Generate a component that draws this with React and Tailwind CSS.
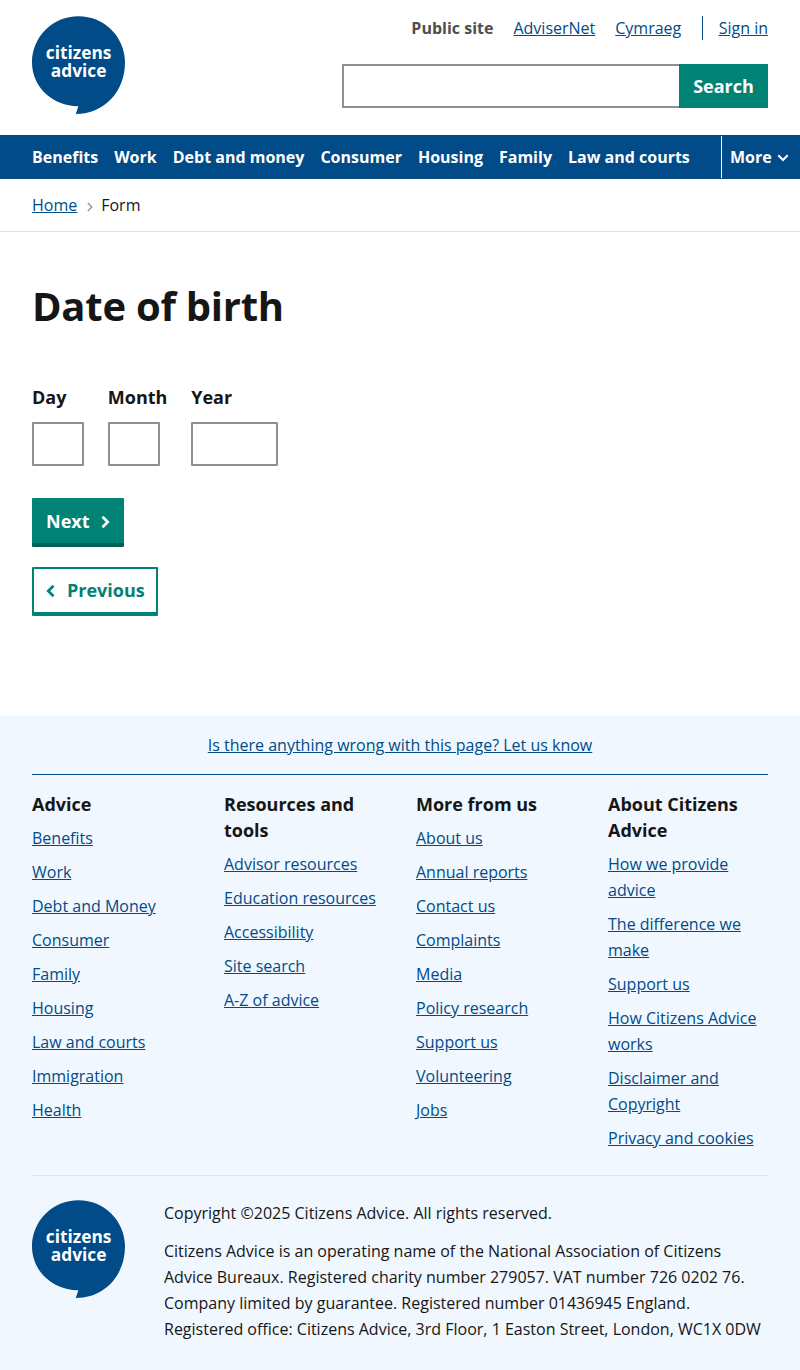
const navItems = ['Benefits', 'Work', 'Debt and money', 'Consumer', 'Housing', 'Family', 'Law and courts'];

const footerColumns = [
  {
    title: 'Advice',
    links: ['Benefits', 'Work', 'Debt and Money', 'Consumer', 'Family', 'Housing', 'Law and courts', 'Immigration', 'Health'],
  },
  {
    title: 'Resources and tools',
    links: ['Advisor resources', 'Education resources', 'Accessibility', 'Site search', 'A-Z of advice'],
  },
  {
    title: 'More from us',
    links: ['About us', 'Annual reports', 'Contact us', 'Complaints', 'Media', 'Policy research', 'Support us', 'Volunteering', 'Jobs'],
  },
  {
    title: 'About Citizens Advice',
    links: [
      'How we provide advice',
      'The difference we make',
      'Support us',
      'How Citizens Advice works',
      'Disclaimer and Copyright',
      'Privacy and cookies',
    ],
  },
];

const dateFields = [
  { label: 'Day', width: 'w-[52px]' },
  { label: 'Month', width: 'w-[52px]' },
  { label: 'Year', width: 'w-[87px]' },
];

function Logo() {
  return (
    <svg width="93" height="98" viewBox="0 0 93 98" className="block shrink-0" role="img" aria-label="Citizens Advice">
      <path
        fill="#004b88"
        d="M46.5.3C72.2.3 93 20.8 93 46.6C93 75.5 72.5 98 43.8 98L46.4 90.3C20.5 90.3 0 71 0 46.6C0 20.8 20.8.3 46.5.3Z"
      />
      <g fill="#fff" fontFamily="'Open Sans', sans-serif" fontWeight="700" fontSize="18" textAnchor="middle">
        <text x="46.6" y="43.4" textLength="65.6" lengthAdjust="spacingAndGlyphs">citizens</text>
        <text x="46.6" y="61.4" textLength="55.6" lengthAdjust="spacingAndGlyphs">advice</text>
      </g>
    </svg>
  );
}

function Link({ children }) {
  return (
    <a href="#" className="text-[#004b88] underline">
      {children}
    </a>
  );
}

function Chevron({ d, className, width, height, stroke }) {
  return (
    <svg width={width} height={height} viewBox={`0 0 ${width} ${height}`} fill="none" stroke="currentColor" strokeWidth={stroke} className={className} aria-hidden="true">
      <path d={d} />
    </svg>
  );
}

export default function App() {
  return (
    <div className="min-h-[1370px] bg-white font-['Open_Sans',sans-serif] text-base leading-[26px] text-[#161616] antialiased">
      <header className="flex h-[135px] justify-between px-8 pt-4">
        <Logo />
        <div className="flex flex-col items-end">
          <div className="flex h-6 items-center">
            <span className="mr-5 font-bold text-[#4c4f4f]">Public site</span>
            <span className="mr-5"><Link>AdviserNet</Link></span>
            <Link>Cymraeg</Link>
            <span className="ml-[20.4px] flex h-6 items-center border-l border-[#004b88] pl-4"><Link>Sign in</Link></span>
          </div>
          <form className="mt-6 flex h-11">
            <input aria-label="Search" className="w-[337px] border-2 border-r-0 border-[#8c9196] bg-white px-2 outline-none" />
            <button type="button" className="w-[89px] bg-[#008275] text-lg font-bold text-white">Search</button>
          </form>
        </div>
      </header>

      <nav className="flex h-11 items-center justify-between bg-[#004b88] pl-8 font-bold text-white">
        <ul className="flex gap-4">
          {navItems.map((item) => (
            <li key={item}><a href="#">{item}</a></li>
          ))}
        </ul>
        <button type="button" className="flex h-[42px] w-[79px] items-center border-l border-white pl-2">
          More
          <Chevron width={12} height={8} stroke={2} d="M1.3 1.3L6 6L10.7 1.3" className="mt-0.5 ml-[5px]" />
        </button>
      </nav>

      <div className="flex h-[53px] items-center border-b border-[#e1e3e5] px-8">
        <Link>Home</Link>
        <Chevron width={6} height={10} stroke={1.3} d="M.8 1L4.8 5L.8 9" className="mt-[3px] mr-2 ml-2.5 text-[#8c9196]" />
        <span>Form</span>
      </div>

      <main className="h-[484px] px-8 pt-12">
        <h1 className="text-[40px] leading-[52px] font-bold tracking-[-0.25px]">Date of birth</h1>
        <div className="mt-[52px] flex gap-[23.8px]">
          {dateFields.map((field) => (
            <label key={field.label} className="flex flex-col text-lg leading-[26px] font-bold">
              {field.label}
              <input className={`mt-3 h-11 rounded-[1px] border-2 border-[#8c9196] bg-white outline-none ${field.width}`} />
            </label>
          ))}
        </div>
        <div className="mt-8 flex flex-col items-start gap-5">
          <button type="button" className="flex h-[49px] w-[92px] items-center rounded-[1px] border-b-4 border-[#005f56] bg-[#008275] pl-3.5 text-lg font-bold text-white">
            Next
            <Chevron width={9} height={14} stroke={2.7} d="M1.5 1.8L6.7 7L1.5 12.2" className="mt-0.5 ml-[11px]" />
          </button>
          <button type="button" className="flex h-[49px] w-[126px] items-center rounded-[1px] border-2 border-b-4 border-[#008275] bg-white pb-0.5 pl-3 text-lg font-bold text-[#008275]">
            <Chevron width={9} height={14} stroke={2.7} d="M7.5 1.8L2.3 7L7.5 12.2" className="mt-0.5 mr-3" />
            Previous
          </button>
        </div>
      </main>

      <footer className="h-[654px] bg-[#f0f7ff] px-8 pt-4">
        <div className="border-b border-[#004b88] pb-4 text-center">
          <Link>Is there anything wrong with this page? Let us know</Link>
        </div>
        <div className="grid h-[401px] grid-cols-4 gap-8 border-b border-[#e1e3e5] pt-4">
          {footerColumns.map((column) => (
            <section key={column.title}>
              <h2 className="text-lg leading-[26px] font-bold">{column.title}</h2>
              <ul className="mt-2 space-y-2">
                {column.links.map((link) => (
                  <li key={link}><Link>{link}</Link></li>
                ))}
              </ul>
            </section>
          ))}
        </div>
        <div className="flex gap-[39px] pt-6">
          <Logo />
          <div className="space-y-3">
            <p>Copyright ©2025 Citizens Advice. All rights reserved.</p>
            <p>
              Citizens Advice is an operating name of the National Association of Citizens Advice Bureaux. Registered charity number
              279057. VAT number 726 0202 76. Company limited by guarantee. Registered number 01436945 England. Registered office:
              Citizens Advice, 3rd Floor, 1 Easton Street, London, WC1X 0DW
            </p>
          </div>
        </div>
      </footer>
    </div>
  );
}
